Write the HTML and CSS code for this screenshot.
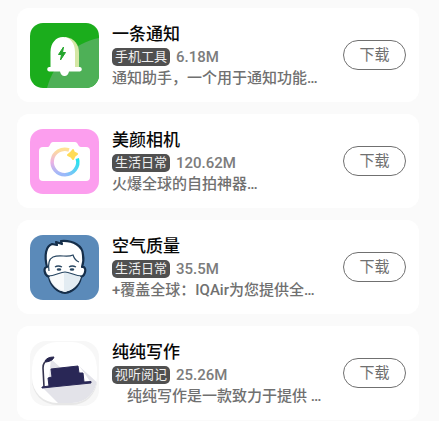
FILE: index.html
```html
<!DOCTYPE html>
<html lang="zh-CN">
<head>
<meta charset="utf-8">
<meta name="viewport" content="width=device-width, initial-scale=1">
<title>应用列表</title>
<link rel="stylesheet" href="styles.css">
</head>
<body>
<main class="app-list">
  <article class="card">
    <svg class="icon" viewBox="0 0 69 65" aria-hidden="true">
      <defs><clipPath id="tile"><rect width="69" height="65" rx="13"/></clipPath></defs>
      <g clip-path="url(#tile)">
        <rect width="69" height="65" fill="#1bad1c"/>
        <path d="M69 15C44 20 24 39 17 65H69Z" fill="#4eb057"/>
      </g>
      <path d="M35 14C45 15 49 22 49 30V45H38Z" fill="#d5e7a5"/>
      <path d="M20.500 44V29C20.500 20 26 14 33 14S45 20 45 29V44H50A2.300 2.300 0 0 1 50 48.500H39C38.500 51 37 53 34.500 53S30.500 51 30 48.500H19A2.300 2.300 0 0 1 19 44Z" fill="#fff"/>
      <path d="M33.500 24L28.500 31.500H31.500L30.500 37L35.500 29.500H32.500Z" fill="#22a52b" stroke="#22a52b"/>
    </svg>
    <div class="info">
      <h2 class="name">一条通知</h2>
      <div class="meta"><span class="tag">手机工具</span><span class="size">6.18M</span></div>
      <p class="desc">通知助手，一个用于通知功能…</p>
    </div>
    <button class="download" type="button">下载</button>
  </article>

  <article class="card">
    <svg class="icon" viewBox="0 0 69 65" aria-hidden="true">
      <defs>
        <linearGradient id="ringLeft" x1="0" y1="0" x2="0" y2="1"><stop offset="0" stop-color="#ffe194"/><stop offset=".5" stop-color="#edb2e4"/><stop offset="1" stop-color="#9ab9fa"/></linearGradient>
        <linearGradient id="ringRight" x1="0" y1="1" x2="1" y2="0"><stop offset="0" stop-color="#9ab9fa"/><stop offset="1" stop-color="#21e5ee"/></linearGradient>
      </defs>
      <rect width="69" height="65" rx="13" fill="#fc9eee"/>
      <path d="M13 18H18C20 18 20 13 23 13H45C48 13 48 18 51 18H56Q60 18 60 22V48Q60 52 56 52H13Q9 52 9 48V22Q9 18 13 18Z" fill="#fff"/>
      <path d="M39 21A12.700 12.700 0 1 0 35 45.700" fill="none" stroke="url(#ringLeft)" stroke-width="3.500"/>
      <path d="M35 45.700A12.700 12.700 0 0 0 47.300 29.500" fill="none" stroke="url(#ringRight)" stroke-width="3.500"/>
      <path d="M43 21L44 23.500L47 25L44.500 27L43 30L41 27.500L38 26L41 23.500Z" fill="#ffdc58" stroke="#ffdc58" stroke-width="2" stroke-linejoin="round"/>
    </svg>
    <div class="info">
      <h2 class="name">美颜相机</h2>
      <div class="meta"><span class="tag">生活日常</span><span class="size">120.62M</span></div>
      <p class="desc">火爆全球的自拍神器…</p>
    </div>
    <button class="download" type="button">下载</button>
  </article>

  <article class="card">
    <svg class="icon" viewBox="0 0 69 65" aria-hidden="true">
      <rect width="69" height="65" rx="13" fill="#5b8ab9"/>
      <path d="M17 32C14 20 16 11 22 9L27 10L26 7L32 9L31 6C43 5 53 11 53 20C54 25 53 29 52 32C57 31 56 40 51 42C49 52 42 57 35 58C27 57 21 51 19 42C14 40 13 32 17 32Z" fill="#fff" stroke="#152e4a" stroke-width="2.200" stroke-linejoin="round"/>
      <path d="M19 42L33 37Q35 36 37 37L51 42C49 50 43 55 35 57C27 55 21 50 19 42Z" fill="#e3ecf2"/>
      <path d="M20 42L34 37V56C27 54 22 50 20 42Z" fill="#f8fafb"/>
      <path d="M19 36C18 30 19 24 23 22C30 19 37 23 43 20C44 23 46 26 49 27M18 41C25 41 30 37 35 37S45 41 52 41" fill="none" stroke="#284661" stroke-width="1.200"/>
      <path d="M25 32Q28 30 32 32M39 32Q42 30 46 32" fill="none" stroke="#284661" stroke-width="1.300"/>
      <ellipse cx="29" cy="34.500" rx="2.300" ry="1.200" fill="#284661"/><ellipse cx="42" cy="34.500" rx="2.300" ry="1.200" fill="#284661"/>
    </svg>
    <div class="info">
      <h2 class="name">空气质量</h2>
      <div class="meta"><span class="tag">生活日常</span><span class="size">35.5M</span></div>
      <p class="desc">+覆盖全球：IQAir为您提供全…</p>
    </div>
    <button class="download" type="button">下载</button>
  </article>

  <article class="card">
    <svg class="icon" viewBox="0 0 69 65" aria-hidden="true">
      <defs><clipPath id="disc"><rect x="2" y="1" width="65" height="61" rx="25"/></clipPath></defs>
      <rect width="69" height="65" rx="16" fill="#f7f7f7"/>
      <rect x="2" y="2" width="65" height="62" rx="25" fill="#e7e7e7"/>
      <rect x="2" y="1" width="65" height="61" rx="25" fill="#fff"/>
      <g clip-path="url(#disc)">
        <path d="M21 18L31 27L18 46ZM49 25L69 43V65H31L13 47L61 42L55 33Z" fill="#e3e3e9"/>
      </g>
      <path d="M14 46L13 27Q13 20 19 19" fill="none" stroke="#35344e" stroke-width="1.600"/>
      <path d="M15 20Q17 16 24 16Q23 20 16 21Z" fill="#27254e" stroke="#27254e" stroke-linejoin="round"/>
      <path d="M21 28L48 25L49 32L53 32L54 41L61 40.500L61 42L12 47L12 46L19 45L18 37L22 36Z" fill="#292756" stroke="#292756" stroke-linejoin="round"/>
    </svg>
    <div class="info">
      <h2 class="name">纯纯写作</h2>
      <div class="meta"><span class="tag">视听阅记</span><span class="size">25.26M</span></div>
      <p class="desc">　纯纯写作是一款致力于提供 …</p>
    </div>
    <button class="download" type="button">下载</button>
  </article>
</main>
</body>
</html>
```

FILE: styles.css
```css
* {
  box-sizing: border-box;
}

body {
  margin: 0;
  background: #fafafa;
  font-family: Roboto, "Noto Sans CJK SC", sans-serif;
}

.app-list {
  display: grid;
  gap: 12px;
  padding: 8px 20px 0 17px;
}

.card {
  display: flex;
  align-items: center;
  padding: 14px 13px;
  border-radius: 12px;
  background: #fff;
}

.icon {
  flex: none;
  width: 69px;
  height: 65px;
}

.info {
  flex: 1;
  min-width: 0;
  margin-left: 13px;
}

.name {
  margin: 0;
  font-size: 17px;
  font-weight: 500;
  line-height: 24px;
  color: #080808;
}

.meta {
  display: flex;
  align-items: center;
  gap: 6px;
  height: 22px;
}

.tag {
  padding: 0 3px;
  border-radius: 5px;
  background: #505050;
  color: #eee;
  font-size: 13px;
  line-height: 18px;
}

.size {
  color: #7c7c7c;
  font-size: 15px;
  font-weight: 500;
  line-height: 22px;
}

.desc {
  margin: 0;
  color: #707070;
  font-size: 15px;
  font-weight: 500;
  line-height: 20px;
  white-space: nowrap;
}

.download {
  flex: none;
  width: 63px;
  height: 30px;
  padding: 0;
  border: 1px solid #707070;
  border-radius: 15px;
  background: transparent;
  color: #707070;
  font-family: inherit;
  font-size: 15px;
  line-height: 28px;
}
```
